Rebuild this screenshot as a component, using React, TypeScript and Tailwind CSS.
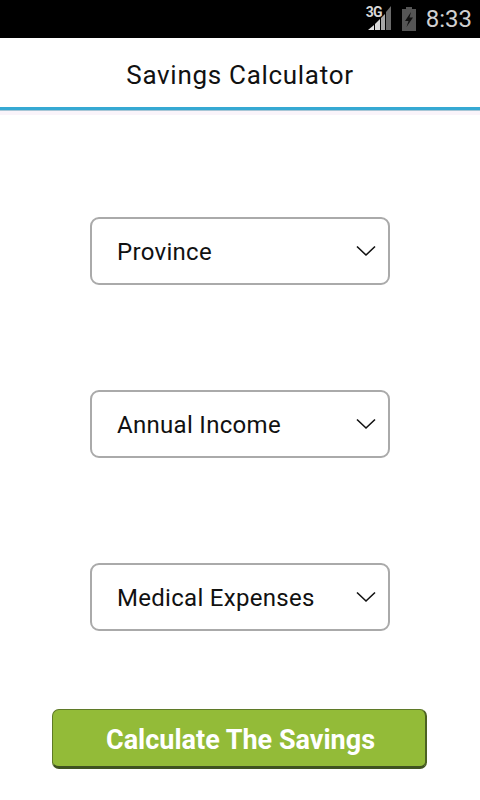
import React from 'react';

const selects = ['Province', 'Annual Income', 'Medical Expenses'];

const Chevron = () => (
  <svg width="20" height="12" viewBox="0 0 20 12" fill="none" stroke="#111" strokeWidth="1.6" className="absolute right-[12px] top-[26px]">
    <path d="M1 1.5 L10 10 L19 1.5" />
  </svg>
);

const StatusBar = () => (
  <div className="h-[38px] bg-black flex items-center justify-end pr-[8px]">
    <div className="relative w-[26px] h-[26px] mr-[8px] mt-[-2px]">
      <svg width="26" height="26" viewBox="0 0 26 26" className="absolute left-0 top-0">
        <path d="M1 25 L7 25 L7 20 Z" fill="#e0e0e0" />
        <path d="M8 25 L13 25 L13 14 L8 19 Z" fill="#d8d8d8" />
        <path d="M14 25 L18 25 L18 9 L14 13 Z" fill="#a8a8a8" />
        <path d="M19 25 L24 25 L24 1 L19 7 Z" fill="#6a6a6a" />
      </svg>
      <span className="absolute left-[-1px] top-[0px] text-[14px] leading-[14px] font-bold text-[#d8d8d8] font-['Roboto',sans-serif] tracking-[-0.8px]">3G</span>
    </div>
    <svg width="16" height="24" viewBox="0 0 16 24" className="mr-[9px]">
      <path d="M5 0 H11 V2 H15 V24 H1 V2 H5 Z" fill="#555555" />
      <path d="M10 5 L4 14 H7.5 L5.5 20 L12 10.5 H8.5 L10 5 Z" fill="#111" />
    </svg>
    <span className="text-[24px] leading-none text-[#d0d0d0] font-['Roboto',sans-serif]">8:33</span>
  </div>
);

export default function App() {
  return (
    <div className="w-[480px] h-[800px] bg-white flex flex-col overflow-hidden font-['Roboto',sans-serif]">
      <StatusBar />
      <div className="h-[69px] flex items-center justify-center pt-[6px] text-[26px] text-[#111] tracking-[0.7px]">
        Savings Calculator
      </div>
      <div className="h-[3px] bg-[#35a9d3]" />
      <div className="h-[1px] bg-[#a9c7d6]" />
      <div className="h-[4px] bg-[#faf4fa]" />
      <div className="flex flex-col items-center gap-[105px] pt-[102px]">
        {selects.map((label) => (
          <div key={label} className="relative w-[300px] h-[68px] border-2 border-[#aaaaaa] rounded-[9px] flex items-center pl-[25px] pt-[2px] text-[24px] text-[#111] tracking-[0.3px]">
            {label}
            <Chevron />
          </div>
        ))}
      </div>
      <div className="flex justify-center pt-[78px] pr-[2px]">
        <button className="w-[375px] h-[60px] bg-[#93bb38] rounded-[7px] border border-[#5f7a28] border-b-[3px] border-b-[#3f5220] border-r-2 border-r-[#4c6223] text-white font-bold text-[27px] flex items-center justify-center pt-[4px] pl-[4px]">
          Calculate The Savings
        </button>
      </div>
    </div>
  );
}
